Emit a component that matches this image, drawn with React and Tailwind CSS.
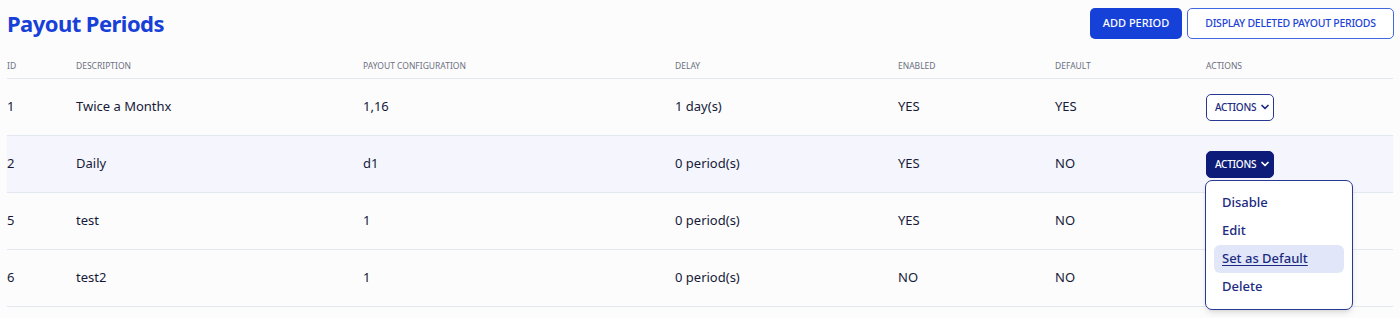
import { ChevronDown } from 'lucide-react';

const rows = [
  { id: 1, description: 'Twice a Monthx', config: '1,16', delay: '1 day(s)', enabled: 'YES', isDefault: 'YES' },
  { id: 2, description: 'Daily', config: 'd1', delay: '0 period(s)', enabled: 'YES', isDefault: 'NO', open: true },
  { id: 5, description: 'test', config: '1', delay: '0 period(s)', enabled: 'YES', isDefault: 'NO' },
  { id: 6, description: 'test2', config: '1', delay: '0 period(s)', enabled: 'NO', isDefault: 'NO' },
];

const cols = 'grid grid-cols-[69px_287px_312px_223px_157px_151px_1fr] items-center';

const menuItems = ['Disable', 'Edit', 'Set as Default', 'Delete'];

const ActionsButton = ({ open }) => (
  <div className="relative">
    <button
      className={
        'flex items-center gap-[3px] h-[27px] w-[68px] pl-[8px] rounded-[5px] border text-[10px] font-medium tracking-tight ' +
        (open ? 'bg-[#0c1c78] border-[#0c1c78] text-white' : 'bg-white border-[#2a3990] text-[#1c2a80]')
      }
    >
      ACTIONS
      <ChevronDown size={12} strokeWidth={3.5} />
    </button>
    {open && (
      <div className="absolute left-[-1px] top-[29px] z-10 w-[148px] rounded-[7px] border border-[#2a3990] bg-white py-[8px] px-[8px] shadow-md">
        {menuItems.map(item => (
          <div
            key={item}
            className={
              'h-[28px] flex items-center px-[8px] rounded-[6px] text-[13px] font-medium text-[#1c2a80] ' +
              (item === 'Set as Default' ? 'bg-[#e1e7f8] underline underline-offset-2' : '')
            }
          >
            {item}
          </div>
        ))}
      </div>
    )}
  </div>
);

export default function App() {
  return (
    <div className="min-h-[318px] bg-[#fcfcfd] font-['Noto_Sans',sans-serif] text-[#161a38]">
      <div className="flex items-center justify-between pl-[7px] pr-[6px] pt-[8px]">
        <h1 className="text-[22px] leading-[31px] font-bold text-[#1740d8] tracking-tight">Payout Periods</h1>
        <div className="flex gap-[5px]">
          <button className="h-[31px] w-[92px] rounded-[5px] bg-[#1641d8] text-white text-[11px] font-medium">
            ADD PERIOD
          </button>
          <button className="h-[31px] w-[207px] rounded-[5px] border border-[#4068e3] bg-white text-[#1d44d8] text-[10.5px] font-medium tracking-tight">
            DISPLAY DELETED PAYOUT PERIODS
          </button>
        </div>
      </div>

      <div className="mx-[7px] mt-[16px]">
        <div className={cols + ' h-[24px] border-b border-[#e4e8f1] text-[8.5px] text-[#6b7080]'}>
          <div>ID</div>
          <div>DESCRIPTION</div>
          <div>PAYOUT CONFIGURATION</div>
          <div>DELAY</div>
          <div>ENABLED</div>
          <div>DEFAULT</div>
          <div>ACTIONS</div>
        </div>
        {rows.map(r => (
          <div
            key={r.id}
            className={cols + ' h-[57px] border-b border-[#e4e8f1] text-[13px] ' + (r.open ? 'bg-[#f5f6fd]' : '')}
          >
            <div>{r.id}</div>
            <div>{r.description}</div>
            <div>{r.config}</div>
            <div>{r.delay}</div>
            <div>{r.enabled}</div>
            <div>{r.isDefault}</div>
            <div>
              <ActionsButton open={r.open} />
            </div>
          </div>
        ))}
      </div>
    </div>
  );
}
